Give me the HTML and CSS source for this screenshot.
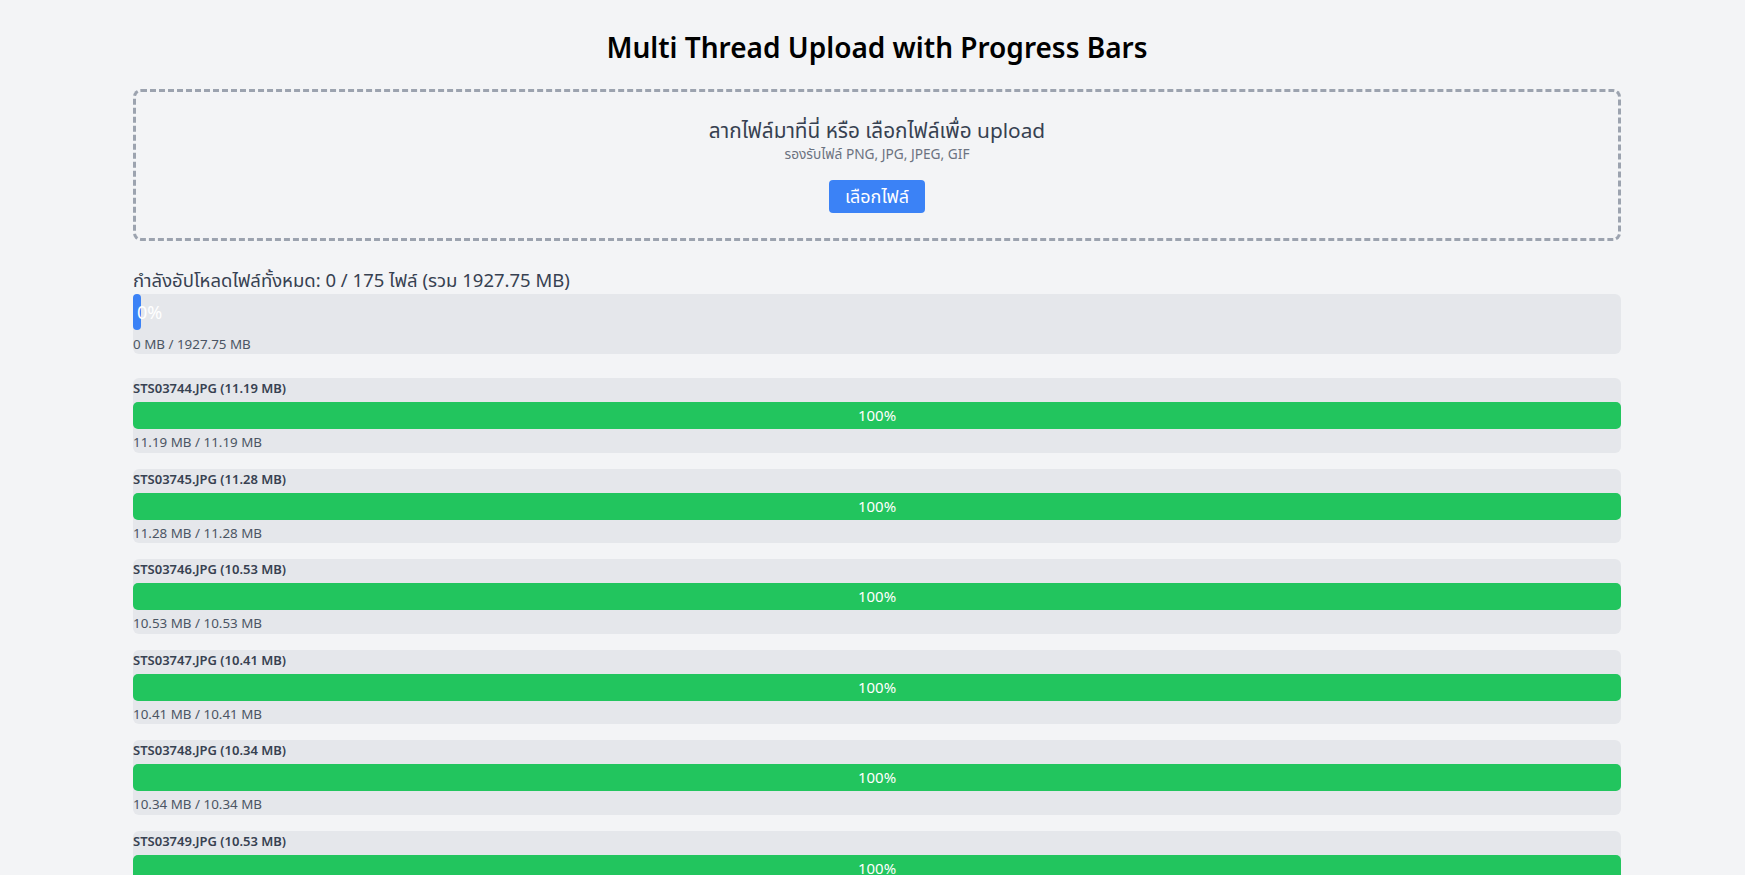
FILE: index.html
```html
<!DOCTYPE html>
<html lang="th">
<head>
<meta charset="utf-8">
<title>Multi Thread Upload with Progress Bars</title>
<link rel="stylesheet" href="styles.css">
</head>
<body>
<div class="container">
  <h1 class="title">Multi Thread Upload with Progress Bars</h1>

  <div class="dropzone">
    <p class="drop-main">ลากไฟล์มาที่นี่ หรือ เลือกไฟล์เพื่อ upload</p>
    <p class="drop-sub">รองรับไฟล์ PNG, JPG, JPEG, GIF</p>
    <button class="pick-btn" type="button">เลือกไฟล์</button>
  </div>

  <section class="overall">
    <h2 class="overall-title">กำลังอัปโหลดไฟล์ทั้งหมด: 0 / 175 ไฟล์ (รวม 1927.75 MB)</h2>
    <div class="overall-box">
      <div class="overall-bar" style="width:0%"><span class="overall-pct">0%</span></div>
      <p class="overall-size">0 MB / 1927.75 MB</p>
    </div>
  </section>

  <ul class="files">
    <li class="file">
      <p class="file-name">STS03744.JPG (11.19 MB)</p>
      <div class="file-bar" style="width:100%">100%</div>
      <p class="file-size">11.19 MB / 11.19 MB</p>
    </li>
    <li class="file">
      <p class="file-name">STS03745.JPG (11.28 MB)</p>
      <div class="file-bar" style="width:100%">100%</div>
      <p class="file-size">11.28 MB / 11.28 MB</p>
    </li>
    <li class="file">
      <p class="file-name">STS03746.JPG (10.53 MB)</p>
      <div class="file-bar" style="width:100%">100%</div>
      <p class="file-size">10.53 MB / 10.53 MB</p>
    </li>
    <li class="file">
      <p class="file-name">STS03747.JPG (10.41 MB)</p>
      <div class="file-bar" style="width:100%">100%</div>
      <p class="file-size">10.41 MB / 10.41 MB</p>
    </li>
    <li class="file">
      <p class="file-name">STS03748.JPG (10.34 MB)</p>
      <div class="file-bar" style="width:100%">100%</div>
      <p class="file-size">10.34 MB / 10.34 MB</p>
    </li>
    <li class="file">
      <p class="file-name">STS03749.JPG (10.53 MB)</p>
      <div class="file-bar" style="width:100%">100%</div>
      <p class="file-size">10.53 MB / 10.53 MB</p>
    </li>
  </ul>
</div>
</body>
</html>
```

FILE: styles.css
```css
* { box-sizing: border-box; }

html, body {
  margin: 0;
  padding: 0;
  background: #f3f4f6;
  font-family: "Noto Sans", "Noto Sans Thai", "Open Sans", sans-serif;
  color: #374151;
  overflow: hidden;
}

p, h1, h2, ul { margin: 0; padding: 0; }

.container {
  width: 1488px;
  margin-left: 133px;
  padding-top: 29px;
}

.title {
  font-size: 28px;
  line-height: 36px;
  font-weight: 600;
  color: #000;
  text-align: center;
  margin-bottom: 24px;
}

.dropzone {
  border: 3px dashed #9ca3af;
  border-radius: 8px;
  padding: 24px 24px 25px;
  text-align: center;
}

.drop-main {
  font-size: 20.8px;
  line-height: 28px;
  color: #374151;
}

.drop-sub {
  font-size: 13.7px;
  line-height: 20px;
  color: #6b7280;
}

.pick-btn {
  margin-top: 16px;
  background: #3b82f6;
  color: #fff;
  border: 0;
  border-radius: 4px;
  font-family: inherit;
  font-size: 18px;
  line-height: 25px;
  padding: 4px 16px;
  cursor: pointer;
}

.overall {
  margin-top: 25px;
}

.overall-title {
  font-size: 18.5px;
  line-height: 28px;
  font-weight: 400;
  color: #374151;
}

.overall-box {
  background: #e5e7eb;
  border-radius: 6px;
}

.overall-bar {
  background: #3b82f6;
  border-radius: 6px;
  height: 36px;
  padding: 0 4px;
  display: flex;
  align-items: center;
  overflow: visible;
  white-space: nowrap;
}

.overall-pct {
  color: #fff;
  font-size: 18px;
  line-height: 36px;
}

.overall-size {
  margin-top: 4px;
  font-size: 13.4px;
  line-height: 20px;
  color: #4b5563;
}

.files {
  list-style: none;
  margin-top: 24px;
  display: flex;
  flex-direction: column;
  gap: 16px;
}

.file {
  background: #e5e7eb;
  border-radius: 6px;
}

.file-name {
  font-size: 13px;
  line-height: 20px;
  font-weight: 600;
  color: #374151;
}

.file-bar {
  margin-top: 4px;
  height: 27px;
  line-height: 27px;
  background: #22c55e;
  border-radius: 5px;
  color: #fff;
  text-align: center;
  font-size: 15px;
}

.file-size {
  margin-top: 3px;
  font-size: 13.4px;
  line-height: 20.5px;
  color: #4b5563;
}
```
